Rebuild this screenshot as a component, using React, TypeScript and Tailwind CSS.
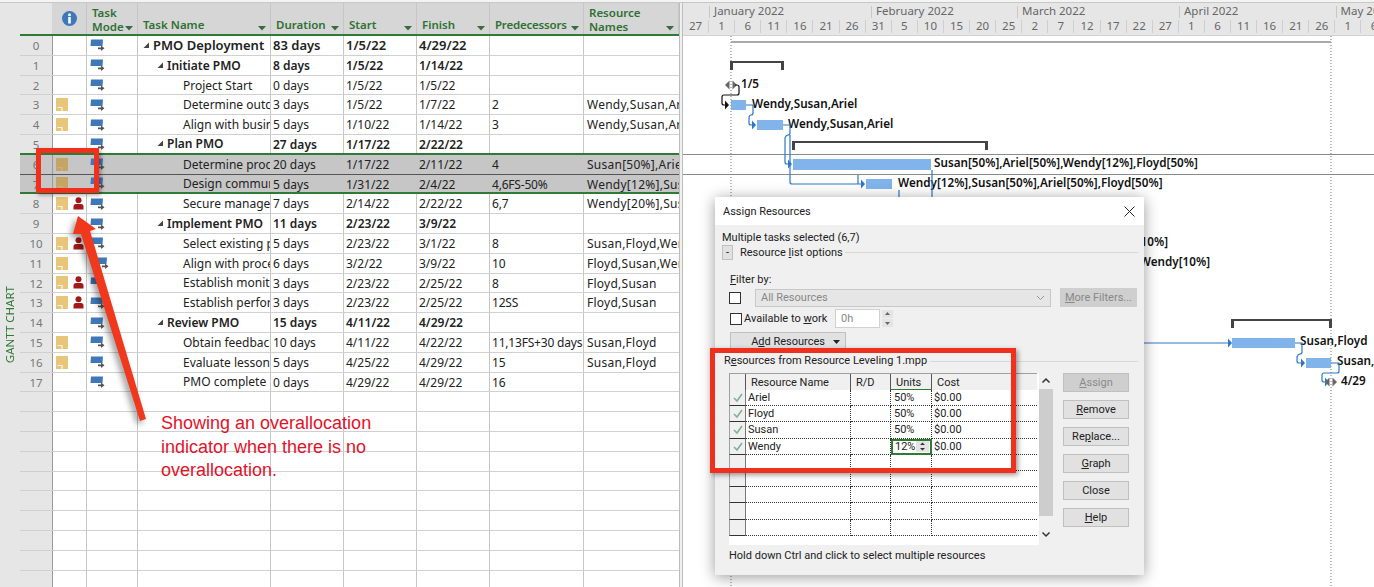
// App.tsx — Project Gantt view with Assign Resources dialog
import React from "react"

type Row = {
  id: number
  level: number
  name: string
  dur: string
  start: string
  finish: string
  pred?: string
  res?: string
  note?: boolean
  over?: boolean
  sum?: boolean
  big?: boolean
  sel?: boolean
  modeX?: boolean
}

const rows: Row[] = [
  { id: 0, level: 0, name: "PMO Deployment", dur: "83 days", start: "1/5/22", finish: "4/29/22", sum: true, big: true },
  { id: 1, level: 1, name: "Initiate PMO", dur: "8 days", start: "1/5/22", finish: "1/14/22", sum: true },
  { id: 2, level: 2, name: "Project Start", dur: "0 days", start: "1/5/22", finish: "1/5/22" },
  { id: 3, level: 2, name: "Determine outcomes", dur: "3 days", start: "1/5/22", finish: "1/7/22", pred: "2", res: "Wendy,Susan,Ariel", note: true },
  { id: 4, level: 2, name: "Align with business", dur: "5 days", start: "1/10/22", finish: "1/14/22", pred: "3", res: "Wendy,Susan,Ariel", note: true },
  { id: 5, level: 1, name: "Plan PMO", dur: "27 days", start: "1/17/22", finish: "2/22/22", sum: true },
  { id: 6, level: 2, name: "Determine process", dur: "20 days", start: "1/17/22", finish: "2/11/22", pred: "4", res: "Susan[50%],Ariel[50%]", note: true, sel: true },
  { id: 7, level: 2, name: "Design communication", dur: "5 days", start: "1/31/22", finish: "2/4/22", pred: "4,6FS-50%", res: "Wendy[12%],Susan[50%]", note: true, sel: true },
  { id: 8, level: 2, name: "Secure management", dur: "7 days", start: "2/14/22", finish: "2/22/22", pred: "6,7", res: "Wendy[20%],Susan[50%]", note: true, over: true },
  { id: 9, level: 1, name: "Implement PMO", dur: "11 days", start: "2/23/22", finish: "3/9/22", sum: true },
  { id: 10, level: 2, name: "Select existing process", dur: "5 days", start: "2/23/22", finish: "3/1/22", pred: "8", res: "Susan,Floyd,Wendy", note: true, over: true },
  { id: 11, level: 2, name: "Align with process", dur: "6 days", start: "3/2/22", finish: "3/9/22", pred: "10", res: "Floyd,Susan,Wendy", note: true, modeX: true },
  { id: 12, level: 2, name: "Establish monitoring", dur: "3 days", start: "2/23/22", finish: "2/25/22", pred: "8", res: "Floyd,Susan", note: true, over: true },
  { id: 13, level: 2, name: "Establish performance", dur: "3 days", start: "2/23/22", finish: "2/25/22", pred: "12SS", res: "Floyd,Susan", note: true, over: true },
  { id: 14, level: 1, name: "Review PMO", dur: "15 days", start: "4/11/22", finish: "4/29/22", sum: true },
  { id: 15, level: 2, name: "Obtain feedback", dur: "10 days", start: "4/11/22", finish: "4/22/22", pred: "11,13FS+30 days", res: "Susan,Floyd", note: true },
  { id: 16, level: 2, name: "Evaluate lessons learned", dur: "5 days", start: "4/25/22", finish: "4/29/22", pred: "15", res: "Susan,Floyd", note: true },
  { id: 17, level: 2, name: "PMO complete", dur: "0 days", start: "4/29/22", finish: "4/29/22", pred: "16" },
]

const emptyRows = Array.from({ length: 10 }, (_, i) => i)
const days = [27, 1, 6, 11, 16, 21, 26, 31, 5, 10, 15, 20, 25, 2, 7, 12, 17, 22, 27, 1, 6, 11, 16, 21, 26, 1, 6]
const font = { fontFamily: '"Noto Sans", sans-serif' }
const dlgFont = { fontFamily: 'Roboto, sans-serif' }

function NoteIcon({ dim }: { dim?: boolean }) {
  return (
    <svg width="12" height="13" viewBox="0 0 12 13" className="shrink-0">
      <rect width="12" height="13" fill={dim ? "#c4a566" : "#e8c579"} />
      <path d="M1.5 9.5H6V13" fill="none" stroke="#fff" strokeWidth="1.2" opacity={dim ? 0.15 : 0.85} />
    </svg>
  )
}

function PersonIcon() {
  return (
    <svg width="11" height="13" viewBox="0 0 11 13" className="shrink-0">
      <circle cx="5.5" cy="3.2" r="3" fill="#a31818" />
      <path d="M0.5 12.5V9.5Q0.5 7 3 7H8Q10.5 7 10.5 9.5V12.5Z" fill="#a31818" />
    </svg>
  )
}

function ModeIcon() {
  return (
    <svg width="15" height="12" viewBox="0 0 15 12" className="shrink-0">
      <path d="M1 0.5H13L12.5 7H0.5Z" fill="#3f78b8" />
      <path d="M8 8.5H11V6.5L14.5 9.3L11 12V10.2H8Z" fill="#555" />
    </svg>
  )
}

function Caret() {
  return (
    <svg width="8" height="5" viewBox="0 0 8 5" className="shrink-0">
      <path d="M0 0H8L4 4.5Z" fill="#3a6b3f" />
    </svg>
  )
}

function Outline() {
  return (
    <svg width="7" height="7" viewBox="0 0 7 7" className="shrink-0">
      <path d="M6 0.5V6H0.5Z" fill="#444" />
    </svg>
  )
}

function Head({ className, label, tall }: { className: string; label: React.ReactNode; tall?: boolean }) {
  return (
    <div className={`flex items-end justify-between border-r border-[#c6c6c6] pl-[5px] pr-[4px] text-[11.5px] leading-[14px] font-semibold text-[#2f7033] ${tall ? "" : "pb-[2px]"} ${className}`}>
      <span className="whitespace-nowrap">{label}</span>
      <span className={tall ? "mb-[3px]" : "mb-[1px]"}><Caret /></span>
    </div>
  )
}

function TaskTable() {
  return (
    <div className="flex w-[659px] shrink-0 flex-col" style={font}>
      <div className="flex h-[33px] shrink-0 border-b-2 border-[#2f7a35] bg-[#d6d6d6]">
        <div className="w-[32px] shrink-0 bg-[#e6e6e6]" />
        <div className="flex w-[35px] shrink-0 items-center justify-center border-r border-[#c6c6c6]">
          <svg width="15" height="15" viewBox="0 0 15 15">
            <circle cx="7.5" cy="7.5" r="7.5" fill="#3f78b8" />
            <rect x="6.2" y="6" width="2.6" height="6.5" fill="#fff" />
            <circle cx="7.5" cy="3.8" r="1.5" fill="#fff" />
          </svg>
        </div>
        <Head tall className="w-[51px] shrink-0" label={<>Task<br />Mode</>} />
        <Head className="w-[133px] shrink-0" label="Task Name" />
        <Head className="w-[73px] shrink-0" label="Duration" />
        <Head className="w-[73px] shrink-0" label="Start" />
        <Head className="w-[73px] shrink-0" label="Finish" />
        <Head className="w-[94px] shrink-0 tracking-[-0.2px]" label="Predecessors" />
        <Head tall className="w-[95px] shrink-0" label={<>Resource<br />Names</>} />
      </div>
      {rows.map((r) => {
        const weight = r.sum ? "font-semibold" : "font-normal"
        const size = r.big ? "text-[13px]" : "text-[12px]"
        return (
          <div
            key={r.id}
            className={`flex h-[19.8px] shrink-0 border-b ${r.sel ? "bg-[#c6c6c6]" : "bg-white"} ${
              r.id === 5 || r.id === 7 ? "border-b-[2px] border-[#2f7a35]" : r.id === 6 ? "border-[#555]" : "border-[#d0d0d0]"
            } text-[#222] ${size} ${weight} leading-[19px]`}
          >
            <div className={`w-[32px] shrink-0 text-center text-[11.5px] font-normal ${r.sel ? "bg-[#c6c6c6]" : "bg-[#e6e6e6]"} text-[#777]`}>{r.id}</div>
            <div className="flex w-[35px] shrink-0 items-center gap-[5px] border-r border-l border-[#c6c6c6] border-l-[#9a9a9a] pl-[3px]">
              {r.note ? <NoteIcon dim={r.sel} /> : <span className="w-[12px]" />}
              {r.over && <PersonIcon />}
            </div>
            <div className="flex w-[51px] shrink-0 items-center border-r border-[#c6c6c6] pl-[3px]">
              <span className={r.modeX ? "ml-[4px]" : ""}><ModeIcon /></span>
            </div>
            <div
              className={`flex w-[133px] shrink-0 items-center overflow-hidden whitespace-nowrap border-r border-[#c6c6c6] pr-[2px] ${
                r.level === 0 ? "pl-[5px]" : r.level === 1 ? "pl-[19px]" : "pl-[45px]"
              }`}
            >
              {r.sum && <span className="mr-[3px]"><Outline /></span>}
              {r.name}
            </div>
            <div className="w-[73px] shrink-0 overflow-hidden whitespace-nowrap border-r border-[#c6c6c6] pl-[2px]">{r.dur}</div>
            <div className="w-[73px] shrink-0 overflow-hidden whitespace-nowrap border-r border-[#c6c6c6] pl-[2px]">{r.start}</div>
            <div className="w-[73px] shrink-0 overflow-hidden whitespace-nowrap border-r border-[#c6c6c6] pl-[2px]">{r.finish}</div>
            <div className="w-[94px] shrink-0 overflow-hidden whitespace-nowrap border-r border-[#c6c6c6] pl-[2px] tracking-[-0.2px]">{r.pred}</div>
            <div className="w-[95px] shrink-0 overflow-hidden whitespace-nowrap pl-[3px] tracking-[0.25px]">{r.res}</div>
          </div>
        )
      })}
      {emptyRows.map((i) => (
        <div key={i} className="flex h-[19.8px] shrink-0 border-b border-[#d0d0d0] bg-white">
          <div className="w-[32px] shrink-0 bg-[#e6e6e6]" />
          <div className="w-[35px] shrink-0 border-r border-l border-[#c6c6c6] border-l-[#9a9a9a]" />
          <div className="w-[51px] shrink-0 border-r border-[#c6c6c6]" />
          <div className="w-[133px] shrink-0 border-r border-[#c6c6c6]" />
          <div className="w-[73px] shrink-0 border-r border-[#c6c6c6]" />
          <div className="w-[73px] shrink-0 border-r border-[#c6c6c6]" />
          <div className="w-[73px] shrink-0 border-r border-[#c6c6c6]" />
          <div className="w-[94px] shrink-0 border-r border-[#c6c6c6]" />
          <div className="w-[95px] shrink-0" />
        </div>
      ))}
    </div>
  )
}

const labelStyle = { fontFamily: '"Noto Sans", sans-serif', fontSize: 11.7, fontWeight: 600, fill: "#111" }

function Bar({ x, y, w, h = 10 }: { x: number; y: number; w: number; h?: number }) {
  return <rect x={x} y={y} width={w} height={h} fill="#82b4ec" />
}

function Summary({ x1, x2, y, color = "#444" }: { x1: number; x2: number; y: number; color?: string }) {
  return (
    <g fill={color}>
      <rect x={x1} y={y} width={x2 - x1} height={2} />
      <rect x={x1} y={y} width={3} height={9} />
      <rect x={x2 - 3} y={y} width={3} height={9} />
    </g>
  )
}

function Link({ d, tip, y, color = "#2c78c8" }: { d: string; tip: number; y: number; color?: string }) {
  return (
    <g>
      <path d={d} fill="none" stroke={color} strokeWidth="1.2" />
      <path d={`M${tip - 4} ${y - 4.5}L${tip} ${y}L${tip - 4} ${y + 4.5}Z`} fill={color} />
    </g>
  )
}

function Milestone({ x, y }: { x: number; y: number }) {
  return (
    <g fill="#666">
      <path d={`M${x - 1.5} ${y - 4.5}L${x - 6} ${y}L${x - 1.5} ${y + 4.5}Z`} />
      <path d={`M${x + 1.5} ${y - 4.5}L${x + 6} ${y}L${x + 1.5} ${y + 4.5}Z`} />
    </g>
  )
}

function GanttPanel() {
  return (
    <div className="flex min-w-0 flex-1 flex-col" style={font}>
      <div className="h-[33px] shrink-0 overflow-hidden border-b border-[#d0d0d0] bg-[#e6e6e6] text-[11.5px] text-[#666]">
        <div className="flex h-[17px] items-start whitespace-nowrap pt-[3px] leading-[10px]">
          <div className="w-[26px] shrink-0" />
          <div className="h-[12px] w-[162px] shrink-0 border-l border-[#c8c8c8] pl-[4px]">January 2022</div>
          <div className="h-[12px] w-[146px] shrink-0 border-l border-[#c8c8c8] pl-[4px]">February 2022</div>
          <div className="h-[12px] w-[162px] shrink-0 border-l border-[#c8c8c8] pl-[4px]">March 2022</div>
          <div className="h-[12px] w-[156.6px] shrink-0 border-l border-[#c8c8c8] pl-[4px]">April 2022</div>
          <div className="h-[12px] shrink-0 border-l border-[#c8c8c8] pl-[4px]">May 2022</div>
        </div>
        <div className="flex h-[15px] items-start whitespace-nowrap leading-[11px]">
          {days.map((d, i) => (
            <div key={i} className="h-[13px] w-[26.1px] shrink-0 border-r border-[#cfcfcf] text-center">{d}</div>
          ))}
        </div>
      </div>
      <svg width="691" height="551" viewBox="683 36 691 551" className="block shrink-0 bg-white">
        <line x1="731" y1="36" x2="731" y2="587" stroke="#777" strokeDasharray="1 2" />
        <line x1="1331" y1="36" x2="1331" y2="587" stroke="#777" strokeDasharray="1 2" />
        <line x1="683" y1="154.5" x2="1374" y2="154.5" stroke="#8a8a8a" />
        <line x1="683" y1="174.5" x2="1374" y2="174.5" stroke="#8a8a8a" />

        <rect x="731" y="41" width="600" height="2" fill="#a9a9a9" />
        <Summary x1={730} x2={784} y={61} />
        <Summary x1={792} x2={988} y={141} />
        <Summary x1={1231} x2={1332} y={319} />

        <Milestone x={731} y={85} />
        <text x="741" y="88" style={labelStyle}>1/5</text>
        <Link d="M735 85H737Q739 85 739 87V93Q739 95 737 95H724Q722 95 722 97V103Q722 105 724 105H727" tip={729} y={105} color="#111" />

        <Bar x={731} y={100} w={15} />
        <text x="752" y="108" style={labelStyle}>Wendy,Susan,Ariel</text>
        <Link d="M746 105H753V113Q753 115 751 115T749 118V123Q749 125 751 125H753" tip={756} y={125} />
        <Bar x={757} y={120} w={26} />
        <text x="788" y="128" style={labelStyle}>Wendy,Susan,Ariel</text>
        <Link d="M783 125H790V133Q790 135 788 135T785 138V162Q785 164 787 164H789" tip={792} y={164} />
        <Bar x={793} y={159} w={138} h={11} />
        <text x="934" y="167" style={labelStyle}>Susan[50%],Ariel[50%],Wendy[12%],Floyd[50%]</text>
        <Link d="M790 135V182Q790 184 792 184H862" tip={865} y={184} />
        <path d="M858 175V184" stroke="#2c78c8" strokeWidth="1.2" />
        <Bar x={866} y={179} w={26} />
        <text x="898" y="187" style={labelStyle}>Wendy[12%],Susan[50%],Ariel[50%],Floyd[50%]</text>
        <path d="M899 190V200M932 170V200" stroke="#2c78c8" strokeWidth="1.2" />

        <text x="1168" y="246" textAnchor="end" style={labelStyle}>Susan[10%],Floyd[10%]</text>
        <text x="1210" y="266" textAnchor="end" style={labelStyle}>Floyd[10%],Susan[10%],Wendy[10%]</text>

        <Link d="M1100 343H1228" tip={1232} y={343} />
        <Bar x={1232} y={338} w={63} />
        <text x="1300" y="345" style={labelStyle}>Susan,Floyd</text>
        <Link d="M1295 343H1302V352Q1302 354 1300 354T1297 357V361Q1297 363 1299 363H1302" tip={1305} y={363} />
        <Bar x={1306} y={358} w={25} />
        <text x="1337" y="365" style={labelStyle}>Susan,Floyd</text>
        <Link d="M1331 363H1339V371Q1339 373 1337 373H1324Q1322 373 1322 375V380Q1322 382 1324 382H1326" tip={1329} y={382} />
        <Milestone x={1331} y={382} />
        <text x="1341" y="385" style={labelStyle}>4/29</text>
      </svg>
    </div>
  )
}

function DlgButton({ label, off }: { label: React.ReactNode; off?: boolean }) {
  return (
    <div className={`flex h-[19px] w-[66px] items-center justify-center border border-[#c0c0c0] pt-[1px] text-[11px] ${off ? "bg-[#cfcfcf] text-[#8a8a8a]" : "bg-[#e1e1e1] text-[#222]"}`}>
      {label}
    </div>
  )
}

const resRows = [
  { name: "Ariel", units: "50%", cost: "$0.00" },
  { name: "Floyd", units: "50%", cost: "$0.00" },
  { name: "Susan", units: "50%", cost: "$0.00" },
  { name: "Wendy", units: "12%", cost: "$0.00", edit: true },
  { name: "" }, { name: "" }, { name: "" }, { name: "" }, { name: "" },
]

function ResourceGrid() {
  return (
    <div className="flex h-[172px] w-[324px] shrink-0 overflow-hidden bg-white">
      <div className="w-[308px] shrink-0">
        <div className="flex h-[17px] border-t border-[#a0a0a0] bg-[#f0f0f0] text-[11px] leading-[18px] text-[#222]">
          <div className="w-[17px] shrink-0 border-r border-[#555] border-l border-l-[#a0a0a0]" />
          <div className="w-[105px] shrink-0 border-r border-[#555] pl-[5px]">Resource Name</div>
          <div className="w-[40px] shrink-0 border-r border-[#555] pl-[5px]">R/D</div>
          <div className="w-[41px] shrink-0 border-r border-b border-r-[#555] border-b-[#2f7a35] pl-[5px]">Units</div>
          <div className="min-w-0 flex-1 pl-[5px]">Cost</div>
        </div>
        {resRows.map((r, i) => (
          <div key={i} className="flex h-[16.2px] text-[11px] leading-[16px] text-[#222]">
            <div className="flex w-[17px] shrink-0 items-center justify-center border-b border-l border-r border-b-[#333] border-l-[#a0a0a0] border-r-[#777] bg-[#f0f0f0]">
              {r.name && (
                <svg width="10" height="9" viewBox="0 0 10 9">
                  <path d="M1 5L4 8L9 1" fill="none" stroke="#7fb09a" strokeWidth="1.6" />
                </svg>
              )}
            </div>
            <div className="w-[105px] shrink-0 border-r border-b border-dotted border-[#333] pl-[2px]">{r.name}</div>
            <div className="w-[40px] shrink-0 border-r border-b border-dotted border-[#333]" />
            {r.edit ? (
              <div className="flex w-[41px] shrink-0 items-center justify-between border-2 border-[#2f7a35] pl-[2px] pr-[1px]">
                {r.units}
                <svg width="13" height="11" viewBox="0 0 13 11">
                  <rect width="13" height="11" fill="#e4e4e4" />
                  <path d="M6.5 1.5L9 4H4ZM6.5 9.5L9 7H4Z" fill="#333" />
                </svg>
              </div>
            ) : (
              <div className="w-[41px] shrink-0 border-r border-b border-dotted border-[#333] pl-[3px]">{r.units}</div>
            )}
            <div className="min-w-0 flex-1 border-b border-dotted border-[#333] pl-[2px]">{r.cost}</div>
          </div>
        ))}
      </div>
      <div className="ml-[2px] flex w-[14px] shrink-0 flex-col items-center bg-[#f0f0f0]">
        <svg width="14" height="16" viewBox="0 0 14 16" className="shrink-0">
          <path d="M3.5 9.5L7 6L10.5 9.5" fill="none" stroke="#333" strokeWidth="1.5" />
        </svg>
        <div className="h-[127px] w-full shrink-0 bg-[#cdcdcd]" />
        <svg width="14" height="16" viewBox="0 0 14 16" className="mt-[10px] shrink-0">
          <path d="M3.5 6.5L7 10L10.5 6.5" fill="none" stroke="#333" strokeWidth="1.5" />
        </svg>
      </div>
    </div>
  )
}

function AssignDialog() {
  return (
    <div
      className="absolute left-[715px] top-[197px] flex h-[378px] w-[429px] flex-col bg-[#f0f0f0] text-[11px] leading-[16px] text-[#222] shadow-[0_2px_14px_rgba(0,0,0,0.4)]"
      style={dlgFont}
    >
      <div className="flex h-[28px] shrink-0 items-center justify-between bg-white pl-[8px] pr-[9px] pt-[1px] text-[11px]">
        <span>Assign Resources</span>
        <svg width="11" height="11" viewBox="0 0 11 11">
          <path d="M0.5 0.5L10.5 10.5M10.5 0.5L0.5 10.5" stroke="#222" strokeWidth="1" />
        </svg>
      </div>
      <div className="flex flex-col pl-[7px] pr-[6px]">
        <div className="mt-[5px] h-[14px]">Multiple tasks selected (6,7)</div>
        <div className="mt-[1px] flex h-[15px] items-center">
          <div className="flex h-[15px] w-[11px] items-center justify-center border border-[#c0c0c0] bg-[#e1e1e1]">-</div>
          <span className="ml-[7px]">Resource <u>l</u>ist options</span>
          <div className="ml-[2px] h-px min-w-0 flex-1 bg-[#d8d8d8]" />
        </div>
        <div className="ml-[8px] mt-[12px] h-[14px]"><u>F</u>ilter by:</div>
        <div className="ml-[7px] mt-[2px] flex h-[19px] items-center">
          <div className="h-[12px] w-[12px] shrink-0 border border-[#333] bg-white" />
          <div className="ml-[14px] flex h-[18px] w-[296px] shrink-0 items-center justify-between border border-[#c8c8c8] bg-[#e6e6e6] pl-[5px] pr-[5px] text-[#888]">
            All Resources
            <svg width="9" height="6" viewBox="0 0 9 6">
              <path d="M1 1L4.5 4.5L8 1" fill="none" stroke="#999" />
            </svg>
          </div>
          <div className="ml-[9px] flex h-[19px] w-[77px] shrink-0 items-center justify-center bg-[#cfcfcf] text-[#888]"><span><u>M</u>ore Filters...</span></div>
        </div>
        <div className="ml-[8px] mt-[2px] flex h-[19px] items-center">
          <div className="h-[12px] w-[12px] shrink-0 border border-[#333] bg-white" />
          <span className="ml-[2px] w-[91px] shrink-0">Available to <u>w</u>ork</span>
          <div className="flex h-[19px] w-[45px] shrink-0 items-center border border-[#d0d0d0] bg-white pl-[5px] text-[#888]">0h</div>
          <div className="ml-[2px] flex h-[17px] w-[11px] shrink-0 flex-col justify-between">
            <svg width="11" height="8" viewBox="0 0 11 8"><rect width="11" height="8" fill="#e4e4e4" /><path d="M5.5 2L8 5H3Z" fill="#666" /></svg>
            <svg width="11" height="8" viewBox="0 0 11 8"><rect width="11" height="8" fill="#e4e4e4" /><path d="M5.5 6L8 3H3Z" fill="#666" /></svg>
          </div>
        </div>
        <div className="ml-[8px] mt-[4px] flex h-[20px] w-[116px] items-center justify-end gap-[8px] border border-[#c0c0c0] bg-[#e1e1e1] pr-[5px]">
          <span>A<u>d</u>d Resources</span>
          <svg width="7" height="4" viewBox="0 0 7 4"><path d="M0 0H7L3.5 4Z" fill="#222" /></svg>
        </div>
        <div className="ml-[2px] mt-[2px] flex h-[14px] items-center">
          <span>R<u>e</u>sources from Resource Leveling 1.mpp</span>
          <div className="ml-[3px] h-px min-w-0 flex-1 bg-[#d8d8d8]" />
        </div>
        <div className="ml-[7px] mt-[5px] flex">
          <ResourceGrid />
          <div className="ml-[10px] flex flex-col gap-[8px]">
            <DlgButton off label={<span><u>A</u>ssign</span>} />
            <DlgButton label={<span><u>R</u>emove</span>} />
            <DlgButton label={<span>Re<u>p</u>lace...</span>} />
            <DlgButton label={<span><u>G</u>raph</span>} />
            <DlgButton label="Close" />
            <DlgButton label={<span><u>H</u>elp</span>} />
          </div>
        </div>
        <div className="ml-[7px] mt-[3px] h-[14px]">Hold down Ctrl and click to select multiple resources</div>
      </div>
    </div>
  )
}

function Callouts() {
  return (
    <>
      <div className="absolute left-[36px] top-[148px] h-[45px] w-[63px] border-[5px] border-[#f0301c] shadow-[2px_2px_4px_rgba(0,0,0,0.35)]" />
      <div className="absolute left-[710px] top-[348px] h-[125px] w-[306px] border-[5px] border-[#f0301c] shadow-[2px_2px_5px_rgba(0,0,0,0.4)]" />
      <svg width="170" height="230" viewBox="0 200 170 230" className="absolute left-0 top-[200px] overflow-visible drop-shadow-[-3px_3px_3px_rgba(0,0,0,0.4)]">
        <path d="M78 216L96 229L90 231L146 419L140 421L81 234L73 234Z" fill="#f0381c" />
      </svg>
      <div
        className="absolute left-[161px] top-[412px] w-[240px] text-[18px] leading-[23.5px] text-[#e2122a]"
        style={{ fontFamily: '"Liberation Sans", sans-serif' }}
      >
        Showing an overallocation
        <br />
        indicator when there is no
        <br />
        overallocation.
      </div>
    </>
  )
}

export default function App() {
  return (
    <div className="relative flex h-[587px] w-[1374px] flex-col overflow-hidden bg-white">
      <div className="h-[3px] shrink-0 border-b border-[#c8c8c8] bg-[#f4f4f4]" />
      <div className="flex min-h-0 flex-1">
        <div className="flex w-[20px] shrink-0 items-center justify-center bg-[#e6e6e6]">
          <span
            className="mt-[60px] whitespace-nowrap text-[11.5px] text-[#2f7a35] [writing-mode:vertical-rl] rotate-180"
            style={font}
          >
            GANTT CHART
          </span>
        </div>
        <TaskTable />
        <div className="w-[4px] shrink-0 border-x border-[#bdbdbd] bg-[#efefef]" />
        <GanttPanel />
      </div>
      <AssignDialog />
      <Callouts />
    </div>
  )
}
